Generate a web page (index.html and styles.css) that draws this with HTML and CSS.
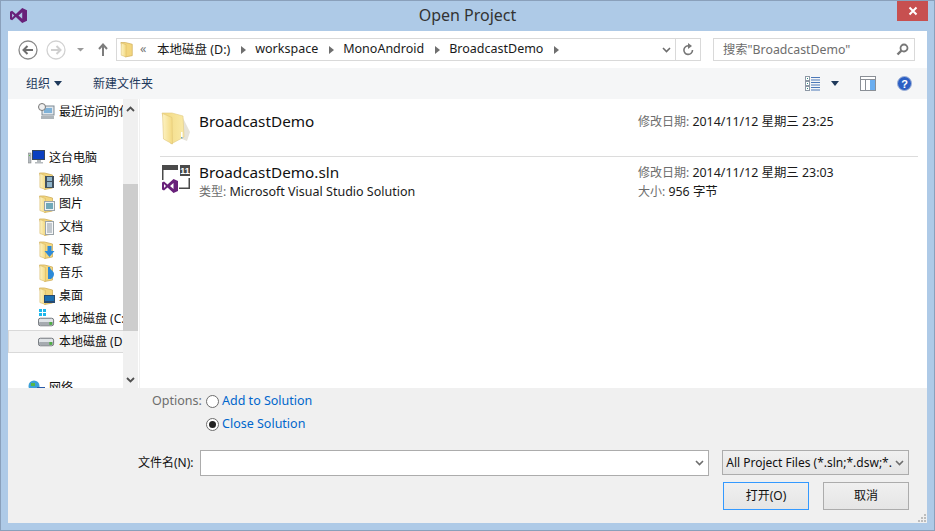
FILE: index.html
```html
<!DOCTYPE html>
<html>
<head>
	<meta charset="utf-8">
	<title>Open Project</title>
	<link rel="stylesheet" href="styles.css">
</head>
<body>
	<svg class="defs" width="0" height="0">
		<linearGradient id="page" x1="0" y1="0" x2="1" y2="0">
			<stop offset="0" stop-color="#fdf3c4"/>
			<stop offset="1" stop-color="#f3d980"/>
		</linearGradient>
		<linearGradient id="back" x1="0" y1="0" x2="1" y2="0">
			<stop offset="0" stop-color="#f2d980"/>
			<stop offset="1" stop-color="#f9e9a6"/>
		</linearGradient>
		<symbol id="folder" viewBox="0 0 16 18">
			<path d="M1 1h5l8 2v13l-8 1.500z" fill="#f3d67e" stroke="#cfae5c" stroke-width=".8"/>
			<path d="M1.400 1.500l5.600 2v14l-5.600-2z" fill="url(#page)" stroke="#d8ba68" stroke-width=".6"/>
		</symbol>
		<symbol id="drive" viewBox="0 0 18 10">
			<rect x=".5" y="1" width="16" height="8" rx="2" fill="#dfe3e6" stroke="#6b7076"/>
			<rect x="1" y="5" width="15" height="3.500" rx="1" fill="#a6abb0"/>
			<rect x="12" y="5" width="3" height="3" fill="#4fae45"/>
		</symbol>
		<symbol id="vs" viewBox="0 0 16 16">
			<path d="M11.500 1L16 3v10l-4.500 2L5.500 9.500 2 12.500 0 11.500v-7l2-1 3.500 3zM11.500 5L8 8l3.500 3zM2 6v4l2-2z" fill="#68217a" fill-rule="evenodd"/>
		</symbol>
	</svg>

	<div class="window">
		<header class="titlebar">
			<svg class="app-icon" width="17" height="17"><use href="#vs"/></svg>
			<span class="title">Open Project</span>
			<div class="close">
				<svg width="10" height="10" viewBox="0 0 10 10"><path d="M1.500 1.500l7 7M8.500 1.500l-7 7" stroke="#fff" stroke-width="2"/></svg>
			</div>
		</header>

		<div class="client">
			<div class="navbar">
				<svg class="nav-buttons" width="92" height="22" viewBox="0 0 92 22">
					<circle cx="11" cy="11" r="9" fill="#fff" stroke="#8a8a8a" stroke-width="1.300"/>
					<path d="M16 11H7M10.500 7l-4 4 4 4" fill="none" stroke="#6e6e6e" stroke-width="2"/>
					<circle cx="39" cy="11" r="9" fill="#fff" stroke="#d2d2d2" stroke-width="1.300"/>
					<path d="M34 11h9M39.500 7l4 4-4 4" fill="none" stroke="#cfcfcf" stroke-width="2"/>
					<path d="M60 9h7l-3.500 3.500z" fill="#9a9a9a"/>
					<path d="M86 17V6M82 10l4-4.500 4 4.500" fill="none" stroke="#7d7d7d" stroke-width="2"/>
				</svg>
				<div class="address">
					<svg class="crumb-folder" width="14" height="17"><use href="#folder"/></svg>
					<span class="chevrons">«</span>
					<span class="crumb">本地磁盘 (D:)</span><i class="sep"></i>
					<span class="crumb">workspace</span><i class="sep"></i>
					<span class="crumb">MonoAndroid</span><i class="sep"></i>
					<span class="crumb">BroadcastDemo</span><i class="sep"></i>
					<span class="spring"></span>
					<svg class="chev" width="9" height="6" viewBox="0 0 9 6"><path d="M1 1l3.500 3.500L8 1" fill="none" stroke="#6d6d6d" stroke-width="1.600"/></svg>
					<div class="refresh">
						<svg width="12" height="13" viewBox="0 0 12 13"><path d="M7.500 3A4.300 4.300 0 1 0 10.500 7" fill="none" stroke="#777" stroke-width="1.600"/><path d="M6 0l4 3-4 3z" fill="#777"/></svg>
					</div>
				</div>
				<div class="search">
					<span class="search-text">搜索"BroadcastDemo"</span>
					<svg width="13" height="13" viewBox="0 0 13 13"><circle cx="8" cy="5" r="3.500" fill="none" stroke="#777" stroke-width="1.800"/><path d="M5.500 7.500L1.500 11.500" stroke="#777" stroke-width="2.400"/></svg>
				</div>
			</div>

			<div class="toolbar">
				<span class="tool">组织</span><i class="caret"></i>
				<span class="tool new-folder">新建文件夹</span>
				<span class="spring"></span>
				<svg class="view-icon" width="16" height="16" viewBox="0 0 16 16">
					<g fill="#fff" stroke="#8d98a5"><rect x=".5" y=".5" width="4" height="4"/><rect x=".5" y="5.500" width="4" height="4"/><rect x=".5" y="10.500" width="4" height="4"/></g>
					<path d="M2 2h1v1H2zM2 7h1v1H2zM2 12h1v1H2z" fill="#2f8f83"/>
					<path d="M6 1.500h9M6 4h9M6 6.500h9M6 9h9M6 11.500h9M6 14h9" stroke="#4c78b8"/>
				</svg>
				<i class="caret view-caret"></i>
				<svg class="pane-icon" width="16" height="15" viewBox="0 0 16 15">
					<rect x=".5" y=".5" width="15" height="14" fill="#fff" stroke="#8a8f96"/>
					<path d="M.5 3.500h15M5.500 3.500v11" stroke="#8a8f96"/>
					<rect x="10" y="4" width="5" height="10" fill="#6aaef0"/>
				</svg>
				<svg class="help-icon" width="15" height="15" viewBox="0 0 15 15">
					<circle cx="7.500" cy="7.500" r="7" fill="#2c5fc4" stroke="#9fb2d6"/>
					<text x="7.500" y="11.500" text-anchor="middle" class="help-mark">?</text>
				</svg>
			</div>

			<div class="main">
				<div class="sidebar">
					<nav class="tree">
						<div class="row sub">
							<svg class="row-icon" width="17" height="17" viewBox="0 0 17 17"><rect x="4" y="3" width="12" height="9" fill="#dfe6ec" stroke="#7e8a94"/><rect x="6" y="5" width="8" height="5" fill="#7fb2d8"/><rect x="3" y="13" width="13" height="3" fill="#aeb5ba"/><circle cx="4" cy="4" r="3.500" fill="#f0f0f0" stroke="#777"/></svg>
							<span>最近访问的位置</span>
						</div>
						<div class="row top gap">
							<svg class="row-icon" width="17" height="15" viewBox="0 0 17 15"><rect x="0" y="3" width="3" height="10" fill="#b6bcc0" stroke="#777" stroke-width=".5"/><rect x="1" y="5" width="1" height="1" fill="#5fbf4f"/><rect x="4" y="0" width="13" height="10" fill="#38475c"/><rect x="5" y="1" width="11" height="8" fill="#0b3fc0"/><path d="M9 10h4v2H9zM7 12h8v1.500H7z" fill="#b5babd"/></svg>
							<span>这台电脑</span>
						</div>
						<div class="row sub">
							<svg class="row-icon" width="17" height="18"><use href="#folder"/><rect x="7" y="4" width="9" height="12" fill="#41505e"/><path d="M9 5h5v4H9zM9 10h5v5H9z" fill="#8fb4c9"/></svg>
							<span>视频</span>
						</div>
						<div class="row sub">
							<svg class="row-icon" width="17" height="18"><use href="#folder"/><rect x="6.500" y="6.500" width="10" height="9" fill="#eef2f3" stroke="#9aa3a8"/><rect x="8" y="8" width="7" height="6" fill="#6fa8b9"/></svg>
							<span>图片</span>
						</div>
						<div class="row sub">
							<svg class="row-icon" width="17" height="18"><use href="#folder"/><rect x="7.500" y="3.500" width="8" height="13" fill="#f5f6f7" stroke="#9aa3a8"/><path d="M9 6h5M9 8h5M9 10h5M9 12h5M9 14h5" stroke="#8d99a3"/></svg>
							<span>文档</span>
						</div>
						<div class="row sub">
							<svg class="row-icon" width="17" height="18"><use href="#folder"/><path d="M9.500 5h4v5h3l-5 6-5-6h3z" fill="#2d8ad8"/></svg>
							<span>下载</span>
						</div>
						<div class="row sub">
							<svg class="row-icon" width="17" height="18"><use href="#folder"/><path d="M10 3h2c0 3 4 4 4 7s-2 4-3 5h-3z" fill="#2d8ad8"/></svg>
							<span>音乐</span>
						</div>
						<div class="row sub">
							<svg class="row-icon" width="17" height="18"><use href="#folder"/><rect x="6" y="8" width="11" height="8" fill="#2a4a6e"/><rect x="7" y="9" width="9" height="5" fill="#1d6fb0"/></svg>
							<span>桌面</span>
						</div>
						<div class="row sub">
							<svg class="row-icon" width="17" height="19" viewBox="0 0 17 19"><path d="M1 0h3v3H1zM5 0h3v3H5zM1 4h3v3H1zM5 4h3v3H5z" fill="#1cb7ec"/><use href="#drive" y="8" width="17" height="10"/></svg>
							<span>本地磁盘 (C:)</span>
						</div>
						<div class="row sub selected">
							<svg class="row-icon" width="17" height="10"><use href="#drive"/></svg>
							<span>本地磁盘 (D:)</span>
						</div>
						<div class="row top gap">
							<svg class="row-icon" width="17" height="15" viewBox="0 0 17 15"><circle cx="6" cy="6" r="5.500" fill="#3aa0d8"/><path d="M3 3h4v3H3z" fill="#56b848"/><rect x="9" y="7" width="8" height="6" fill="#2a5aa8"/></svg>
							<span>网络</span>
						</div>
					</nav>
					<div class="scrollbar">
						<svg class="sb-arrow up" width="9" height="6" viewBox="0 0 9 6"><path d="M1 5l3.500-3.500L8 5" fill="none" stroke="#505050" stroke-width="1.800"/></svg>
						<div class="thumb"></div>
						<svg class="sb-arrow down" width="9" height="6" viewBox="0 0 9 6"><path d="M1 1l3.500 3.500L8 1" fill="none" stroke="#505050" stroke-width="1.800"/></svg>
					</div>
				</div>

				<div class="files">
					<div class="file first">
						<svg class="file-icon" width="30" height="34" viewBox="0 0 30 34">
							<path d="M22 6l7 14-3 9-5-2z" fill="#e6e3d8"/>
							<path d="M1 1h10l11 3 1 21-13 7z" fill="url(#back)" stroke="#e3cb82" stroke-width=".6"/>
							<path d="M1.500 1.500l9.500 4 .5 26.500-9-5z" fill="url(#page)" stroke="#e0c678" stroke-width=".6"/>
							<path d="M20 20h1.500v6H20z" fill="#fff"/>
							<path d="M20 25h1.500v1.500H20z" fill="#6fa8c9"/>
						</svg>
						<div class="file-main"><div class="file-name">BroadcastDemo</div></div>
						<div class="file-meta"><div><span class="key">修改日期:</span> 2014/11/12 星期三 23:25</div></div>
					</div>
					<div class="file second">
						<svg class="file-icon" width="30" height="30" viewBox="0 0 30 30">
							<path d="M1 0h16v5H2.500v10H1z" fill="#4a4a4a"/>
							<path d="M19 0h10v11H19z" fill="#4a4a4a"/>
							<text x="24" y="9" text-anchor="middle" class="sln-mark">11</text>
							<path d="M27.500 13H29v11H18v-1.500h9.500z" fill="#4a4a4a"/>
							<use href="#vs" x="1" y="13" width="16" height="16"/>
						</svg>
						<div class="file-main">
							<div class="file-name">BroadcastDemo.sln</div>
							<div class="file-sub"><span class="key">类型:</span> Microsoft Visual Studio Solution</div>
						</div>
						<div class="file-meta">
							<div><span class="key">修改日期:</span> 2014/11/12 星期三 23:03</div>
							<div class="size"><span class="key">大小:</span> 956 字节</div>
						</div>
					</div>
				</div>
			</div>

			<div class="bottom">
				<div class="options">
					<span class="options-label">Options:</span>
					<div class="radios">
						<div class="radio-row"><i class="radio"></i><span>Add to Solution</span></div>
						<div class="radio-row"><i class="radio checked"></i><span>Close Solution</span></div>
					</div>
				</div>
				<div class="name-row">
					<span class="name-label">文件名(N):</span>
					<div class="name-input">
						<svg width="9" height="6" viewBox="0 0 9 6"><path d="M1 1l3.500 3.500L8 1" fill="none" stroke="#6d6d6d" stroke-width="1.600"/></svg>
					</div>
					<div class="filter">
						<span>All Project Files (*.sln;*.dsw;*.</span>
						<svg width="9" height="6" viewBox="0 0 9 6"><path d="M1 1l3.500 3.500L8 1" fill="none" stroke="#6d6d6d" stroke-width="1.600"/></svg>
					</div>
				</div>
				<div class="buttons">
					<div class="btn default"><span class="btn-text">打开(O)</span></div>
					<div class="btn"><span class="btn-text">取消</span></div>
				</div>
				<svg class="grip" width="9" height="9" viewBox="0 0 9 9"><path d="M6 0h2v2H6zM3 3h2v2H3zM6 3h2v2H6zM0 6h2v2H0zM3 6h2v2H3zM6 6h2v2H6z" fill="#bdbdbd"/></svg>
			</div>
		</div>
	</div>
</body>
</html>
```

FILE: styles.css
```css
* {
  box-sizing: border-box;
}

html, body {
  margin: 0;
  padding: 0;
}

body {
  font-family: "Noto Sans", "Noto Sans CJK SC", sans-serif;
  font-size: 12px;
  color: #1a1a1a;
  overflow: hidden;
}

.defs {
  position: absolute;
}

.window {
  width: 935px;
  height: 531px;
  background: #aecae7;
  border: 1px solid #8aa0bb;
  display: flex;
  flex-direction: column;
  padding: 0 7px 7px;
}

.titlebar {
  height: 30px;
  flex: none;
  display: flex;
  align-items: center;
  justify-content: center;
  position: relative;
}

.app-icon {
  position: absolute;
  left: 2px;
  top: 6px;
}

.title {
  font-size: 16px;
  color: #333;
  margin-top: -3px;
}

.close {
  position: absolute;
  right: -1px;
  top: 0;
  width: 31px;
  height: 20px;
  background: #c75050;
  display: flex;
  align-items: center;
  justify-content: center;
}

.client {
  flex: 1;
  display: flex;
  flex-direction: column;
  background: #fff;
  min-height: 0;
}

.navbar {
  height: 37px;
  flex: none;
  display: flex;
  align-items: center;
  padding: 0 12px 0 9px;
}

.nav-buttons {
  flex: none;
  margin-right: 7px;
}

.address {
  width: 585px;
  height: 23px;
  border: 1px solid #d9d9d9;
  display: flex;
  align-items: center;
  padding-left: 3px;
  font-size: 12.500px;
}

.crumb-folder {
  flex: none;
  margin-right: 6px;
}

.chevrons {
  color: #777;
  width: 17px;
  margin-top: -3px;
}

.crumb {
  white-space: nowrap;
  margin-top: -3px;
}

.sep {
  width: 0;
  height: 0;
  border-left: 5px solid #6f6f6f;
  border-top: 4px solid transparent;
  border-bottom: 4px solid transparent;
  margin: 0 9px 0 11px;
}

.spring {
  flex: 1;
}

.chev {
  margin-right: 4px;
}

.refresh {
  width: 25px;
  height: 100%;
  border-left: 1px solid #d9d9d9;
  display: flex;
  align-items: center;
  justify-content: center;
}

.search {
  width: 202px;
  height: 23px;
  margin-left: 12px;
  border: 1px solid #d9d9d9;
  display: flex;
  align-items: center;
  justify-content: space-between;
  padding: 0 5px 0 9px;
  color: #6d6d6d;
  font-size: 12.300px;
}

.search-text {
  margin-top: -2px;
}

.toolbar {
  height: 31px;
  flex: none;
  background: #f5f6f7;
  display: flex;
  align-items: center;
  padding: 0 15px 0 18px;
  color: #1e395b;
}

.tool {
  margin-top: -2px;
}

.caret {
  width: 0;
  height: 0;
  border-top: 5px solid #1e395b;
  border-left: 4.500px solid transparent;
  border-right: 4.500px solid transparent;
  margin-left: 4px;
}

.new-folder {
  margin-left: 31px;
}

.view-caret {
  margin-left: 10px;
}

.pane-icon {
  margin-left: 21px;
}

.help-icon {
  margin-left: 21px;
}

.help-mark {
  font: bold 11px "Liberation Sans", sans-serif;
  fill: #fff;
}

.sln-mark {
  font: bold 9px "Liberation Sans", sans-serif;
  fill: #fff;
}

.main {
  flex: 1;
  display: flex;
  min-height: 0;
  overflow: hidden;
}

.sidebar {
  width: 132px;
  flex: none;
  display: flex;
  border-right: 1px solid #f0f0f0;
}

.tree {
  width: 115px;
  flex: none;
  padding-top: 1px;
  overflow: hidden;
  color: #111;
}

.row {
  height: 23px;
  display: flex;
  align-items: center;
  white-space: nowrap;
  overflow: hidden;
}

.row span {
  margin-top: -2px;
}

.row.gap {
  margin-top: 23px;
}

.row-icon {
  flex: none;
  margin-right: 4px;
}

.row.sub {
  padding-left: 30px;
}

.row.top {
  padding-left: 20px;
}

.row.selected {
  background: #f4f4f4;
  border: 1px solid #d9d9d9;
  border-right: 0;
  padding-left: 29px;
}

.scrollbar {
  width: 15px;
  flex: none;
  background: #f0f0f0;
  position: relative;
}

.thumb {
  position: absolute;
  left: 0;
  right: 0;
  top: 85px;
  height: 147px;
  background: #cdcdcd;
}

.sb-arrow {
  position: absolute;
  left: 3px;
}

.sb-arrow.up {
  top: 7px;
}

.sb-arrow.down {
  bottom: 5px;
}

.files {
  flex: 1;
  padding: 0 9px 0 20px;
}

.file {
  display: flex;
  position: relative;
}

.file.first {
  height: 58px;
  border-bottom: 1px solid #dcdcdc;
  padding-top: 13px;
}

.file.second {
  padding-top: 8px;
}

.file-icon {
  flex: none;
  margin-left: 1px;
  margin-right: 8px;
}

.file-main {
  width: 439px;
  flex: none;
}

.file-name {
  font-size: 15.300px;
  line-height: 18px;
  color: #111;
}

.file.second .file-name {
  margin-top: -2px;
}

.file-sub {
  font-size: 12.500px;
  line-height: 18px;
  margin-top: 2px;
}

.file-meta {
  font-size: 12.400px;
  line-height: 19px;
}

.file.second .file-meta {
  margin-top: -2px;
}

.key {
  color: #6d6d6d;
  font-size: 12px;
}

.bottom {
  height: 135px;
  flex: none;
  background: #f0f0f0;
  position: relative;
  padding: 4px 18px 0 0;
  display: flex;
  flex-direction: column;
}

.options {
  display: flex;
  padding-left: 144px;
  font-size: 12.500px;
}

.options-label {
  color: #6d6d6d;
  width: 54px;
  line-height: 17px;
}

.radio-row {
  height: 23px;
  display: flex;
  color: #0066cc;
  line-height: 17px;
}

.radio {
  width: 13px;
  height: 13px;
  border-radius: 50%;
  border: 1px solid #6d6d6d;
  background: #fff;
  margin: 3px 3px 0 0;
  position: relative;
}

.radio.checked::after {
  content: "";
  position: absolute;
  left: 2px;
  top: 2px;
  width: 7px;
  height: 7px;
  border-radius: 50%;
  background: #222;
}

.name-row {
  display: flex;
  align-items: flex-start;
  margin-top: 12px;
  padding-left: 130px;
}

.name-label {
  width: 62px;
  line-height: 26px;
  color: #111;
}

.name-input {
  width: 510px;
  height: 26px;
  background: #fff;
  border: 1px solid #acacac;
  display: flex;
  align-items: center;
  justify-content: flex-end;
  padding-right: 4px;
}

.filter {
  width: 187px;
  height: 25px;
  margin-left: 13px;
  background: linear-gradient(#f0f0f0, #e5e5e5);
  border: 1px solid #acacac;
  display: flex;
  align-items: center;
  justify-content: space-between;
  padding: 0 4px 0 3px;
  white-space: nowrap;
  overflow: hidden;
  color: #111;
}

.buttons {
  display: flex;
  justify-content: flex-end;
  gap: 14px;
  margin-top: 6px;
}

.btn {
  width: 86px;
  height: 28px;
  background: linear-gradient(#f0f0f0, #e5e5e5);
  border: 1px solid #acacac;
  display: flex;
  align-items: center;
  justify-content: center;
  color: #111;
}

.btn-text {
  margin-top: -2px;
}

.btn.default {
  border-color: #3399ff;
}

.grip {
  position: absolute;
  right: 0;
  bottom: 0;
}
```
